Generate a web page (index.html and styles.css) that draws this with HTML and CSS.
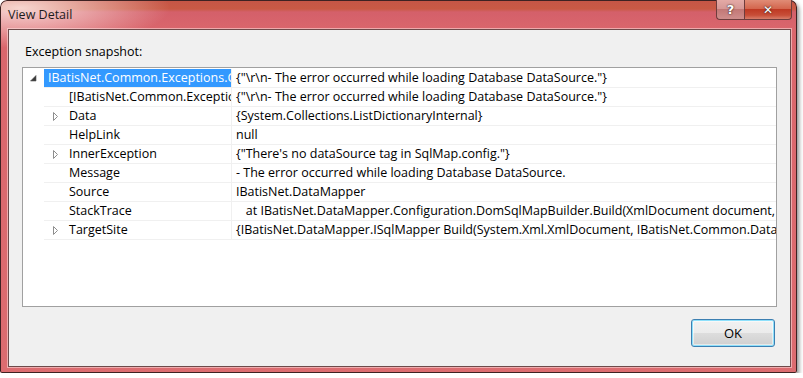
FILE: index.html
```html
<!DOCTYPE html>
<html lang="en">
<head>
    <meta charset="utf-8"/>
    <title>View Detail</title>
    <link rel="stylesheet" href="styles.css">
</head>
<body>
<div class="window">
    <div class="titlebar">
        <span class="title">View Detail</span>
        <div class="caption-btns">
            <span class="cap-btn help">?</span>
            <span class="cap-btn close">&#x2715;</span>
        </div>
    </div>
    <div class="client">
        <div class="label">Exception snapshot:</div>
        <div class="tree">
            <div class="row">
                <span class="exp"><svg width="7" height="7" viewBox="0 0 7 7"><polygon points="6,0.5 6,6 0.5,6" fill="#3a3a3a" stroke="#555" stroke-width="0.6"/></svg></span>
                <span class="name sel">IBatisNet.Common.Exceptions.ConfigurationException</span>
                <span class="val">{"\r\n- The error occurred while loading Database DataSource."}</span>
            </div>
            <div class="row">
                <span class="exp"></span>
                <span class="name lvl1">[IBatisNet.Common.Exceptions.ConfigurationException]</span>
                <span class="val">{"\r\n- The error occurred while loading Database DataSource."}</span>
            </div>
            <div class="row">
                <span class="exp"></span>
                <span class="name lvl1"><svg class="tri" width="6" height="9" viewBox="0 0 6 9"><polygon points="0.5,0.5 4.5,4.5 0.5,8.5" fill="#fff" stroke="#8e8e8e"/></svg>Data</span>
                <span class="val">{System.Collections.ListDictionaryInternal}</span>
            </div>
            <div class="row">
                <span class="exp"></span>
                <span class="name lvl1">HelpLink</span>
                <span class="val">null</span>
            </div>
            <div class="row">
                <span class="exp"></span>
                <span class="name lvl1"><svg class="tri" width="6" height="9" viewBox="0 0 6 9"><polygon points="0.5,0.5 4.5,4.5 0.5,8.5" fill="#fff" stroke="#8e8e8e"/></svg>InnerException</span>
                <span class="val">{"There's no dataSource tag in SqlMap.config."}</span>
            </div>
            <div class="row">
                <span class="exp"></span>
                <span class="name lvl1">Message</span>
                <span class="val">- The error occurred while loading Database DataSource.</span>
            </div>
            <div class="row">
                <span class="exp"></span>
                <span class="name lvl1">Source</span>
                <span class="val">IBatisNet.DataMapper</span>
            </div>
            <div class="row">
                <span class="exp"></span>
                <span class="name lvl1">StackTrace</span>
                <span class="val">&nbsp;&nbsp;&nbsp;at IBatisNet.DataMapper.Configuration.DomSqlMapBuilder.Build(XmlDocument document, DataSource dataSource)</span>
            </div>
            <div class="row">
                <span class="exp"></span>
                <span class="name lvl1"><svg class="tri" width="6" height="9" viewBox="0 0 6 9"><polygon points="0.5,0.5 4.5,4.5 0.5,8.5" fill="#fff" stroke="#8e8e8e"/></svg>TargetSite</span>
                <span class="val">{IBatisNet.DataMapper.ISqlMapper Build(System.Xml.XmlDocument, IBatisNet.Common.DataSource, Boolean, Boolean)}</span>
            </div>
        </div>
        <div class="footer">
            <button class="ok">OK</button>
        </div>
    </div>
</div>
</body>
</html>
```

FILE: styles.css
```css
* {
    margin: 0;
    padding: 0;
    box-sizing: border-box;
}
body {
    background: #fff;
    font-family: "Open Sans", "Liberation Sans", sans-serif;
    font-size: 12.5px;
    color: #000;
}
.window {
    width: 797px;
    height: 373px;
    display: flex;
    flex-direction: column;
    padding: 0 6px 6px 8px;
    border-radius: 7px 7px 2px 2px;
    background:
        radial-gradient(ellipse 150px 40px at 20px 8px, rgba(255, 236, 232, 0.85), rgba(255, 236, 232, 0)),
        linear-gradient(to bottom, #5a2a24 0, #c65646 1px, #c95a45 9px, #d4606a 12px, #da666c 30px, #dc6c70 100%);
    box-shadow: inset 0 0 0 1px #3e2222, 2px 3px 4px rgba(0, 0, 0, 0.45);
}
.titlebar {
    height: 29px;
    display: flex;
    align-items: flex-start;
}
.title {
    margin-top: 6px;
    line-height: 18px;
    color: #1c1c1c;
}
.caption-btns {
    margin-left: auto;
    margin-right: -1px;
    display: flex;
}
.cap-btn {
    height: 20px;
    display: flex;
    align-items: center;
    justify-content: center;
    color: #fff;
    font-family: "DejaVu Sans", sans-serif;
    font-weight: bold;
    border: 1px solid #6e3c3c;
    border-top: none;
    text-shadow: 0 0 2px #3a2020, 0 0 1px #3a2020;
}
.help {
    width: 28px;
    font-size: 13px;
    border-radius: 0 0 0 4px;
    border-right: none;
    background: linear-gradient(to bottom, #e4aaa6 0, #d69896 45%, #c27876 50%, #cf8e8c 100%);
}
.close {
    width: 48px;
    font-size: 12px;
    border-radius: 0 0 4px 0;
    background: linear-gradient(to bottom, #e08c76 0, #d4664e 45%, #bf3a24 50%, #c84e38 80%, #d87e6a 100%);
}
.client {
    flex: 1;
    display: flex;
    flex-direction: column;
    padding: 14px 13px 19px 13px;
    background: #f0f0f0;
    border: 1px solid #6e4a4a;
    box-shadow: 0 0 0 1px rgba(255, 225, 225, 0.55);
}
.label {
    margin-left: 3px;
    line-height: 16px;
}
.tree {
    margin-top: 7px;
    height: 240px;
    background: #fff;
    border: 1px solid #a0a0a0;
    padding-top: 1px;
}
.row {
    display: flex;
    height: 19px;
    line-height: 18px;
}
.exp {
    width: 21px;
    flex: none;
    display: flex;
    align-items: center;
    justify-content: flex-end;
    padding-right: 7px;
}
.name {
    width: 188px;
    flex: none;
    padding-left: 4px;
    white-space: nowrap;
    overflow: hidden;
    border-right: 1px solid #f0f0f0;
    border-bottom: 1px solid #f0f0f0;
    position: relative;
}
.name.sel {
    background: #3399ff;
    color: #fff;
}
.name.lvl1 {
    padding-left: 25px;
}
.tri {
    position: absolute;
    left: 9px;
    top: 5px;
}
.val {
    flex: 1;
    padding-left: 4px;
    white-space: nowrap;
    overflow: hidden;
    border-bottom: 1px solid #f0f0f0;
}
.footer {
    margin-top: 12px;
    display: flex;
    justify-content: flex-end;
}
.ok {
    width: 84px;
    height: 28px;
    margin-right: 2px;
    font-family: inherit;
    font-size: 13px;
    color: #000;
    border: 1px solid #3c7fb1;
    border-radius: 3px;
    background: linear-gradient(to bottom, #f2f2f2 0, #ebebeb 50%, #dddddd 50%, #cfcfcf 100%);
    box-shadow: inset 0 0 0 1px #8ee0fb, inset 0 0 0 2px rgba(255, 255, 255, 0.5);
}
```
